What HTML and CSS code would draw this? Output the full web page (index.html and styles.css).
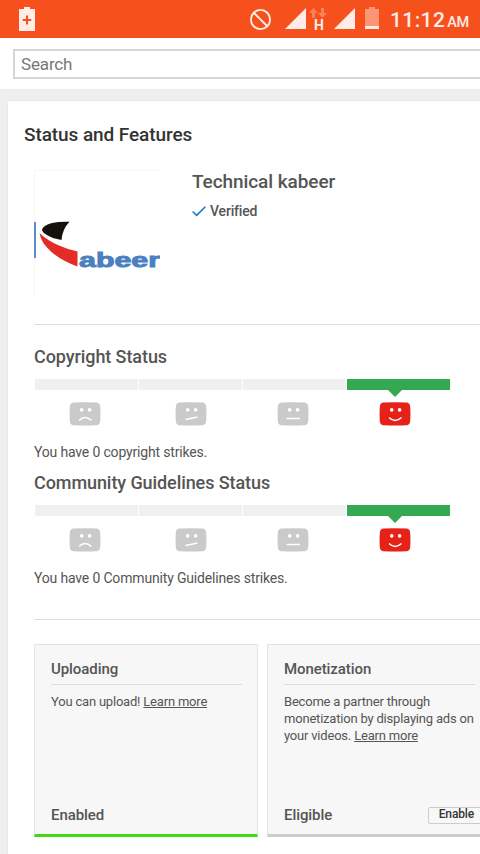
FILE: index.html
```html
<!DOCTYPE html>
<html lang="en">

<head>
    <meta charset="UTF-8">
    <meta name="viewport" content="width=device-width, initial-scale=1.0">
    <title>Status and Features</title>
    <link rel="stylesheet" href="styles.css">
</head>

<body>

    <!-- Face shapes used by both status meters -->
    <svg class="symbols" width="0" height="0">
        <symbol id="face" viewBox="0 0 32 24">
            <path d="M4.5 .6Q16 -.2 27.5 .6Q30.5 .8 31.1 4Q31.8 12 31.1 20Q30.5 23 27.5 23.2Q16 24 4.5 23.2Q1.5 23 .9 20Q.2 12 .9 4Q1.5 .8 4.5 .6Z" fill="currentColor" />
            <circle cx="12.7" cy="7.9" r="1.8" fill="#fff" />
            <circle cx="20.6" cy="7.9" r="1.8" fill="#fff" />
        </symbol>
    </svg>

    <!-- Phone status bar -->
    <header class="status-bar">
        <svg class="battery-saver" width="16" height="25" viewBox="0 0 16 25">
            <path d="M5 0h6v2h5v22H0V2h5z" fill="#ffece6" />
            <path d="M8 8.5v9M3.8 13h8.4" stroke="#f6511d" stroke-width="2" />
        </svg>
        <svg class="status-icons" width="134" height="25" viewBox="0 0 134 25">
            <g fill="none" stroke="#ffece6" stroke-width="1.9">
                <circle cx="10.5" cy="12.5" r="9.6" />
                <path d="M4 6l13 13" />
            </g>
            <path d="M56 1v21H35zM105 1v21H84z" fill="#ffece6" />
            <path d="M63.500 1l4.500 5h-3v5h-3V6h-3zM72.500 11l-4.500-5h3V1h3v5h3z" fill="#ff8058" />
            <text class="network" x="64" y="23">H</text>
            <path d="M119 0h6v2h4v20h-14V2h4z" fill="#fb9675" />
            <path d="M115 19h14v3h-14z" fill="#ffece6" />
        </svg>
        <div class="clock">11:12<small>AM</small></div>
    </header>

    <div class="search-row">
        <input class="search" type="text" placeholder="Search">
    </div>

    <main class="panel">
        <h1>Status and Features</h1>

        <section class="channel">
            <svg class="avatar" width="126" height="126" viewBox="0 0 126 126">
                <path d="M.5 126V.5H126" fill="none" stroke="#f6f6f6" />
                <path d="M0 52h2v36H0z" fill="#5b8dc8" />
                <path d="M35.5 51.8Q28.5 59 27.5 70Q18 68.5 12 64.5Q8 62 8 59.5Q9.5 55 18 53Q25 51.500 35.500 51.800Z" fill="#15110d" />
                <path d="M5.500 63Q14 71 25 75.500Q34 79.500 43.500 81.500V96.500Q28 91 17.500 82Q7 73 5.500 63Z" fill="#e52b26" />
                <text class="logo-text" x="45" y="96.500" textLength="81" lengthAdjust="spacingAndGlyphs">abeer</text>
            </svg>
            <div class="channel-info">
                <h2>Technical kabeer</h2>
                <p class="verified">
                    <svg width="14" height="11" viewBox="0 0 14 11">
                        <path d="M.6 5.500L4.700 9.300L13.300 .8" fill="none" stroke="#1a78cf" stroke-width="1.600" />
                    </svg>
                    Verified
                </p>
            </div>
        </section>

        <section class="standing">
            <h3>Copyright Status</h3>
            <div class="meter">
                <span></span><span></span><span></span><span class="good"></span>
            </div>
            <div class="faces">
                <svg viewBox="0 0 32 24"><use href="#face" /><path d="M10 18.500Q16 12.500 22.500 18.500" /></svg>
                <svg viewBox="0 0 32 24"><use href="#face" /><path d="M10.500 17.500L22.500 15" /></svg>
                <svg viewBox="0 0 32 24"><use href="#face" /><path d="M9.500 16.500H23" /></svg>
                <svg class="happy" viewBox="0 0 32 24"><use href="#face" /><path d="M10 15.500Q16 21.500 22.500 15.500" /></svg>
            </div>
            <p>You have 0 copyright strikes.</p>
        </section>

        <section class="standing">
            <h3>Community Guidelines Status</h3>
            <div class="meter">
                <span></span><span></span><span></span><span class="good"></span>
            </div>
            <div class="faces">
                <svg viewBox="0 0 32 24"><use href="#face" /><path d="M10 18.500Q16 12.500 22.500 18.500" /></svg>
                <svg viewBox="0 0 32 24"><use href="#face" /><path d="M10.500 17.500L22.500 15" /></svg>
                <svg viewBox="0 0 32 24"><use href="#face" /><path d="M9.500 16.500H23" /></svg>
                <svg class="happy" viewBox="0 0 32 24"><use href="#face" /><path d="M10 15.500Q16 21.500 22.500 15.500" /></svg>
            </div>
            <p>You have 0 Community Guidelines strikes.</p>
        </section>

        <section class="features">
            <article class="feature enabled">
                <h4>Uploading</h4>
                <p>You can upload! <a href="#">Learn more</a></p>
                <footer>Enabled</footer>
            </article>
            <article class="feature">
                <h4>Monetization</h4>
                <p>Become a partner through monetization by displaying ads on your videos. <a href="#">Learn more</a></p>
                <footer>Eligible <button class="enable-btn">Enable</button></footer>
            </article>
        </section>
    </main>

</body>

</html>
```
FILE: styles.css
```css
* {
    box-sizing: border-box;
}

body {
    margin: 0;
    height: 854px;
    overflow: hidden;
    background-color: #efefef;
    color: #555;
    font-family: Roboto, sans-serif;
}

h1,
h2,
h3,
h4,
p {
    margin: 0;
    font-weight: 500;
    letter-spacing: -0.08px;
}

.symbols {
    display: block;
}

/* Status bar */
.status-bar {
    display: flex;
    height: 38px;
    padding: 7px 10px 0 19px;
    background-color: #f6511d;
    color: #ffece6;
}

.status-icons {
    margin-left: auto;
    overflow: visible;
}

.network {
    font-size: 14px;
    font-weight: 700;
    fill: #ffece6;
}

.clock {
    width: 80px;
    margin-left: 6px;
    font-size: 21px;
    font-weight: 500;
    line-height: 26px;
    letter-spacing: 0.4px;
    white-space: nowrap;
}

.clock small {
    margin-left: 2px;
    font-size: 14.5px;
    letter-spacing: -0.3px;
}

/* Search */
.search-row {
    height: 51px;
    padding: 11px 0 0 13px;
    overflow: hidden;
    background-color: #fff;
}

.search {
    display: block;
    width: 500px;
    height: 30px;
    padding: 0 6px;
    border: 2px solid #d6d6d6;
    border-radius: 0;
    font-family: inherit;
    font-size: 17px;
    letter-spacing: -0.15px;
}

.search::placeholder {
    color: #777;
}

/* Main panel */
.panel {
    width: 520px;
    height: 760px;
    margin: 12px 0 0 8px;
    padding: 21px 0 0 26px;
    background-color: #fff;
    box-shadow: 0 0 1px #ccc;
}

h1 {
    margin-left: -10px;
    color: #333;
    font-size: 19px;
    line-height: 26px;
}

.channel {
    display: flex;
    gap: 32px;
    height: 155px;
    margin-top: 22px;
    border-bottom: 1px solid #ddd;
}

.logo-text {
    font-family: "Liberation Sans", sans-serif;
    font-size: 20px;
    font-weight: bold;
    fill: #4a7fc0;
    stroke: #4a7fc0;
    stroke-width: 0.9px;
}

h2 {
    font-size: 19px;
    line-height: 24px;
}

.verified {
    display: flex;
    align-items: center;
    gap: 4px;
    margin-top: 8px;
    font-size: 14px;
    line-height: 18px;
    letter-spacing: -0.17px;
}

/* Account standing */
.standing {
    height: 126px;
}

.channel + .standing {
    margin-top: 20px;
}

h3 {
    font-size: 18px;
    line-height: 24px;
}

.meter {
    display: flex;
    gap: 1px;
    margin: 10px 0 0 1px;
}

.meter span {
    width: 103px;
    height: 10.5px;
    background-color: #f0f0f0;
}

.meter .good {
    position: relative;
    background-color: #34a853;
}

.meter .good::after {
    content: "";
    position: absolute;
    top: 10px;
    left: 40px;
    border: 8px solid transparent;
    border-top-color: #34a853;
    border-bottom: 0;
}

.faces {
    display: flex;
    gap: 70px;
    margin: 12px 0 0 35px;
    color: #cacaca;
}

.faces svg {
    width: 32px;
    height: 24px;
}

.faces svg:first-child {
    margin-right: 4px;
}

.faces path {
    fill: none;
    stroke: #fff;
    stroke-width: 1.5;
}

.faces .happy {
    color: #e62117;
}

.standing p {
    margin-top: 17px;
    font-size: 14px;
    font-weight: 400;
    line-height: 18px;
    letter-spacing: -0.17px;
}

/* Feature cards */
.features {
    display: flex;
    gap: 9px;
    margin-top: 22px;
    padding-top: 24px;
    border-top: 1px solid #ddd;
}

.feature {
    display: flex;
    flex-direction: column;
    flex: 0 0 224px;
    height: 193px;
    padding: 14px 15px 10px 16px;
    border: 1px solid #e3e3e3;
    border-bottom: 3px solid #ccc;
    background-color: #f7f7f7;
}

.feature.enabled {
    border-bottom-color: #40d812;
}

h4 {
    padding-bottom: 5px;
    border-bottom: 1px solid #ddd;
    font-size: 15px;
    line-height: 20px;
}

.feature p {
    margin-top: 8px;
    font-size: 13px;
    font-weight: 400;
    line-height: 17px;
    letter-spacing: -0.2px;
}

.feature a {
    color: inherit;
}

.feature footer {
    display: flex;
    justify-content: space-between;
    height: 17px;
    margin-top: auto;
    font-size: 15px;
    font-weight: 500;
    line-height: 17px;
    letter-spacing: -0.08px;
}

.enable-btn {
    height: 17px;
    margin-right: -10px;
    padding: 0 10px 3px;
    border: 1px solid #ccc;
    border-radius: 2px;
    background-color: #f8f8f8;
    color: #333;
    font: 500 12px/12px Roboto, sans-serif;
    letter-spacing: -0.15px;
}
```
